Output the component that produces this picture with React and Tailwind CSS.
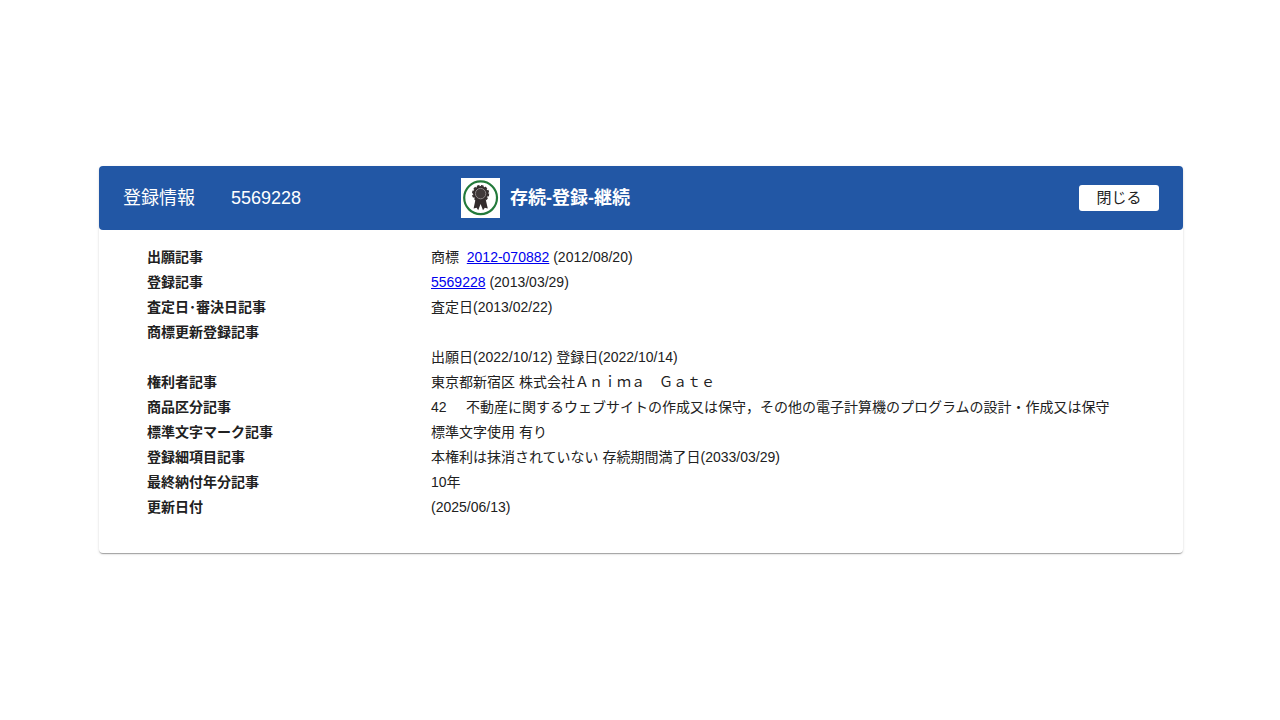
const records = [
  {
    label: "出願記事",
    value: (
      <>
        商標{"\u00a0\u00a0"}
        <a href="#application" className="text-[#0000ee] underline">2012-070882</a> (2012/08/20)
      </>
    ),
  },
  {
    label: "登録記事",
    value: (
      <>
        <a href="#registration" className="text-[#0000ee] underline">5569228</a> (2013/03/29)
      </>
    ),
  },
  { label: "査定日･審決日記事", value: "査定日(2013/02/22)" },
  {
    label: "商標更新登録記事",
    value: (
      <>
        <br />
        出願日(2022/10/12) 登録日(2022/10/14)
      </>
    ),
  },
  { label: "権利者記事", value: "東京都新宿区 株式会社Ａｎｉｍａ　Ｇａｔｅ" },
  {
    label: "商品区分記事",
    value:
      "42\u00a0\u00a0\u00a0\u00a0\u00a0不動産に関するウェブサイトの作成又は保守，その他の電子計算機のプログラムの設計・作成又は保守",
  },
  { label: "標準文字マーク記事", value: "標準文字使用 有り" },
  { label: "登録細項目記事", value: "本権利は抹消されていない 存続期間満了日(2033/03/29)" },
  { label: "最終納付年分記事", value: "10年" },
  { label: "更新日付", value: "(2025/06/13)" },
];

function StatusIcon() {
  return (
    <svg viewBox="0 0 39 40" className="h-10 w-[39px] shrink-0 bg-white" aria-hidden="true">
      <circle cx="19.6" cy="19.8" r="16.4" fill="#fff" stroke="#237a3b" strokeWidth="2.2" />
      {/* ribbons */}
      <path d="M14.6 21 L12.6 30.6 L15.6 29.8 L17.2 32.2 L19.6 26 L22 32.2 L23.8 29.8 L26.8 30.6 L24.6 21 Z" fill="#332c2d" />
      {/* rosette */}
      <circle cx="19.6" cy="15.6" r="7.6" fill="#332c2d" />
      <circle cx="19.6" cy="15.6" r="7.8" fill="none" stroke="#332c2d" strokeWidth="1.6" strokeDasharray="2.6 1.5" />
      <circle cx="19.6" cy="15.6" r="5.2" fill="#40393a" stroke="#8d8788" strokeWidth="1" />
    </svg>
  );
}

export default function App() {
  return (
    <main className="flex min-h-screen items-center bg-white pb-px pl-[99px] pr-[97px] font-['Liberation_Sans','Noto_Sans_CJK_JP',sans-serif] text-[#212121]">
      <section className="w-full rounded bg-white shadow-[0_2px_1px_-1px_rgba(0,0,0,0.2),0_1px_1px_rgba(0,0,0,0.14),0_1px_3px_rgba(0,0,0,0.12)]">
        <header className="flex h-16 items-center rounded bg-[#2257a5] px-6 pb-px text-lg text-white">
          <h1 className="flex w-[338px] shrink-0 gap-9">
            <span>登録情報</span>
            <span>5569228</span>
          </h1>
          <div className="flex items-center gap-[10px] font-bold">
            <StatusIcon />
            <span>存続-登録-継続</span>
          </div>
          <button type="button" className="ml-auto h-[26px] w-20 rounded-[3px] bg-white text-[15px] text-[#212121]">
            閉じる
          </button>
        </header>

        <dl className="px-12 pt-[15px] pb-[33px] text-sm leading-[25px]">
          {records.map((record) => (
            <div key={record.label} className="flex">
              <dt className="w-[284px] shrink-0 font-bold">{record.label}</dt>
              <dd>{record.value}</dd>
            </div>
          ))}
        </dl>
      </section>
    </main>
  );
}
